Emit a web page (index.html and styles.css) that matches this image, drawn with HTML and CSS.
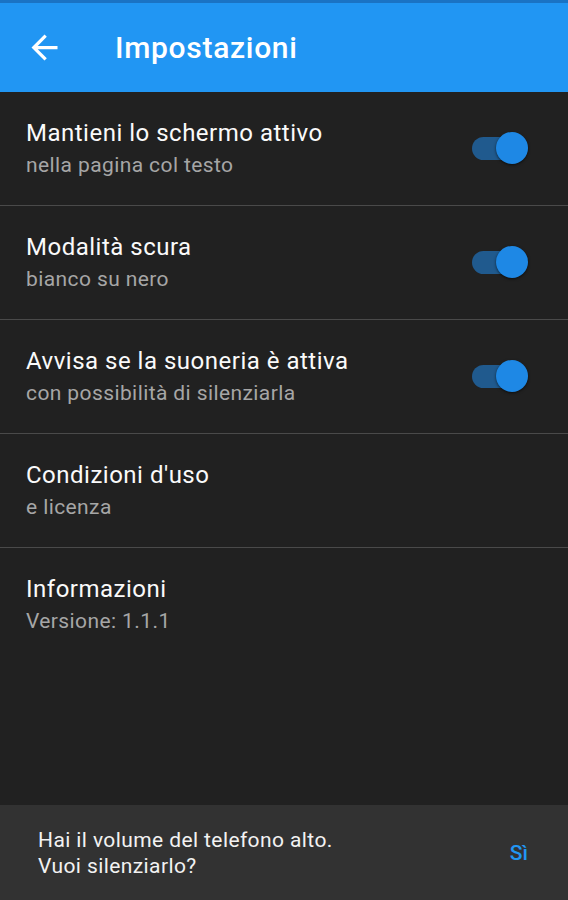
FILE: index.html
```html
<!DOCTYPE html>
<html>
	<head>
		<meta charset="UTF-8">
		<title>Impostazioni</title>
		<link rel="stylesheet" href="styles.css">
	</head>
	<body>
		<div class="statusbar"></div>
		<div class="toolbar">
			<svg class="back" width="39" height="39" viewBox="0 0 24 24">
				<path d="M20 11H7.83l5.59-5.59L12 4l-8 8 8 8 1.41-1.41L7.83 13H20v-2z" fill="#fff"/>
			</svg>
			<span class="toolbar-title">Impostazioni</span>
		</div>

		<div class="settings">
			<div class="row">
				<div class="row-text">
					<p class="row-title">Mantieni lo schermo attivo</p>
					<p class="row-sub">nella pagina col testo</p>
				</div>
				<div class="switch"><span class="track"></span><span class="thumb"></span></div>
			</div>
			<div class="row">
				<div class="row-text">
					<p class="row-title">Modalità scura</p>
					<p class="row-sub">bianco su nero</p>
				</div>
				<div class="switch"><span class="track"></span><span class="thumb"></span></div>
			</div>
			<div class="row">
				<div class="row-text">
					<p class="row-title">Avvisa se la suoneria è attiva</p>
					<p class="row-sub">con possibilità di silenziarla</p>
				</div>
				<div class="switch"><span class="track"></span><span class="thumb"></span></div>
			</div>
			<div class="row">
				<div class="row-text">
					<p class="row-title">Condizioni d'uso</p>
					<p class="row-sub">e licenza</p>
				</div>
			</div>
			<div class="row last">
				<div class="row-text">
					<p class="row-title">Informazioni</p>
					<p class="row-sub">Versione: 1.1.1</p>
				</div>
			</div>
		</div>

		<div class="snackbar">
			<p class="snack-text">Hai il volume del telefono alto.<br>Vuoi silenziarlo?</p>
			<a href="javascript:;" class="snack-action">Sì</a>
		</div>
	</body>
</html>
```

FILE: styles.css
```css
html, body { margin: 0; padding: 0; height: 100%; }
body {
	background: #212121;
	font-family: Roboto, "Noto Sans", sans-serif;
	color: #fff;
	display: flex; flex-direction: column;
	height: 900px; overflow: hidden;
}
p { margin: 0; }

.statusbar { height: 3px; background: #1a73c4; }
.toolbar {
	height: 89px; background: #2196F3;
	display: flex; align-items: center;
}
.back { margin-left: 25px; margin-right: 51px; }
.toolbar-title { font-size: 30px; font-weight: 500; letter-spacing: 0.7px; }

.settings { flex: 1; }
.row {
	height: 113px; border-bottom: 1px solid #4a4a4a;
	display: flex; align-items: center;
	padding: 0 40px 0 26px;
}
.row.last { border-bottom: none; }
.row-text { flex: 1; }
.row-title { font-size: 24px; line-height: 30px; letter-spacing: 0.5px; color: #fafafa; }
.row-sub { font-size: 21px; line-height: 30px; letter-spacing: 0.4px; color: #a6a6a6; margin-top: 2px; }

.switch { position: relative; width: 58px; height: 34px; }
.switch .track {
	position: absolute; left: 2px; top: 5px;
	width: 52px; height: 23px; border-radius: 12px;
	background: #205a8e;
}
.switch .thumb {
	position: absolute; right: 0; top: 0;
	width: 32px; height: 32px; border-radius: 50%;
	background: #1e88e5;
	box-shadow: 0 1px 3px rgba(0,0,0,0.6);
}

.snackbar {
	height: 95px; background: #323232;
	display: flex; align-items: center;
	padding: 0 40px 0 38px;
}
.snack-text { flex: 1; font-size: 21px; line-height: 26px; letter-spacing: 0.4px; color: #f2f2f2; }
.snack-action { color: #2196F3; font-size: 21px; font-weight: 500; text-decoration: none; }
```
